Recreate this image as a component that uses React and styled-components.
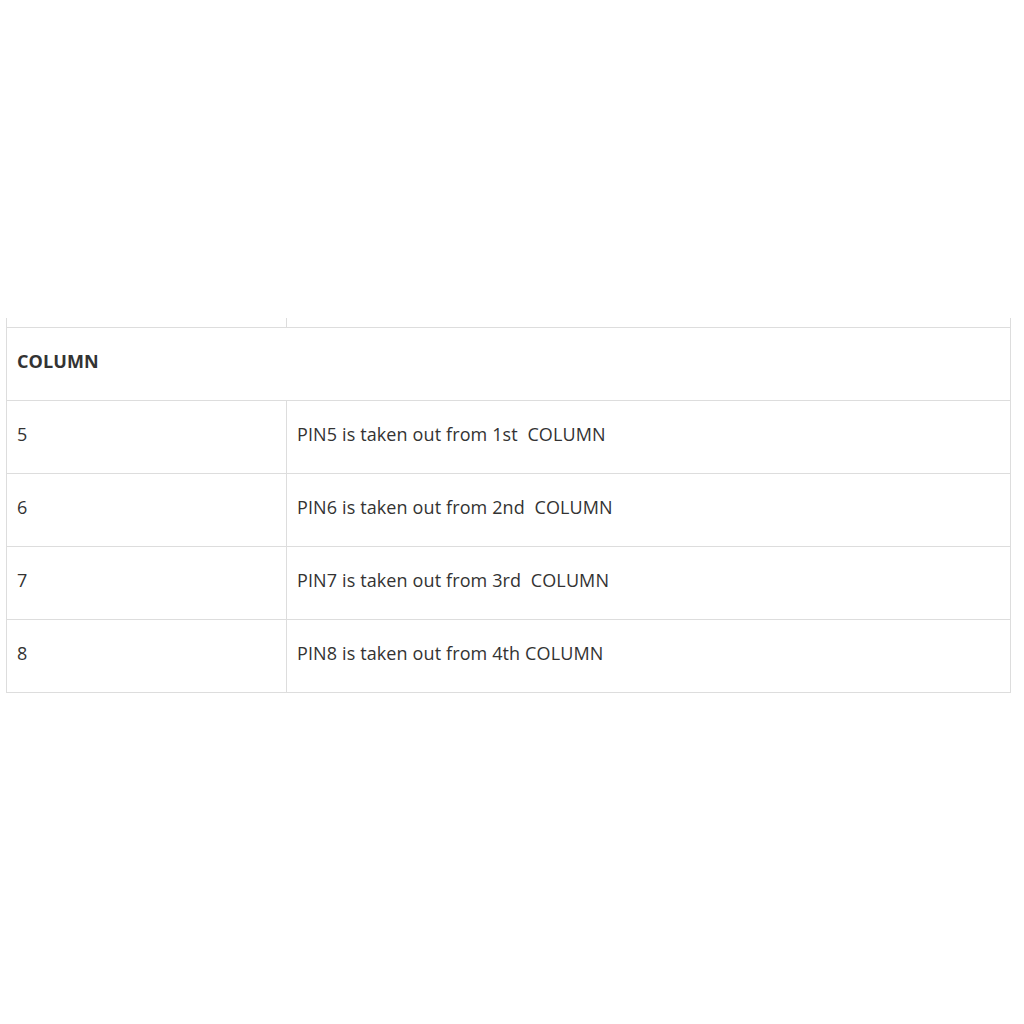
import React from "react";
import styled, { createGlobalStyle } from "styled-components";

const Global = createGlobalStyle`
  html, body { margin: 0; padding: 0; background: #fff; }
  body { font-family: "Open Sans", "Liberation Sans", sans-serif; color: #333; }
`;

const Page = styled.div`
  padding: 318px 13px 0 6px;
`;

const Table = styled.table`
  width: 1005px;
  border-collapse: collapse;
  table-layout: fixed;
  font-size: 18px;
  line-height: 28px;
  color: #333;
`;

const Cell = styled.td`
  border: 1px solid #dddddd;
  padding: 19px 11px 25px 10px;
  vertical-align: middle;
  text-align: left;
  font-weight: ${(p) => (p.$bold ? 700 : 400)};
  letter-spacing: ${(p) => (p.$bold ? "0.1px" : "0.12px")};
`;

const StubCell = styled.td`
  border-left: 1px solid #dddddd;
  border-right: 1px solid #dddddd;
  border-bottom: 1px solid #dddddd;
  height: 9px;
  padding: 0;
`;

const rows = [
  ["5", "PIN5 is taken out from 1st\u00a0 COLUMN"],
  ["6", "PIN6 is taken out from 2nd\u00a0 COLUMN"],
  ["7", "PIN7 is taken out from 3rd\u00a0 COLUMN"],
  ["8", "PIN8 is taken out from 4th COLUMN"],
];

export default function App() {
  return (
    <>
      <Global />
      <Page>
        <Table>
          <colgroup>
            <col style={{ width: 280 }} />
            <col />
          </colgroup>
          <tbody>
            <tr>
              <StubCell />
              <StubCell />
            </tr>
            <tr>
              <Cell colSpan={2} $bold>
                COLUMN
              </Cell>
            </tr>
            {rows.map(([a, b]) => (
              <tr key={a}>
                <Cell>{a}</Cell>
                <Cell>{b}</Cell>
              </tr>
            ))}
          </tbody>
        </Table>
      </Page>
    </>
  );
}
